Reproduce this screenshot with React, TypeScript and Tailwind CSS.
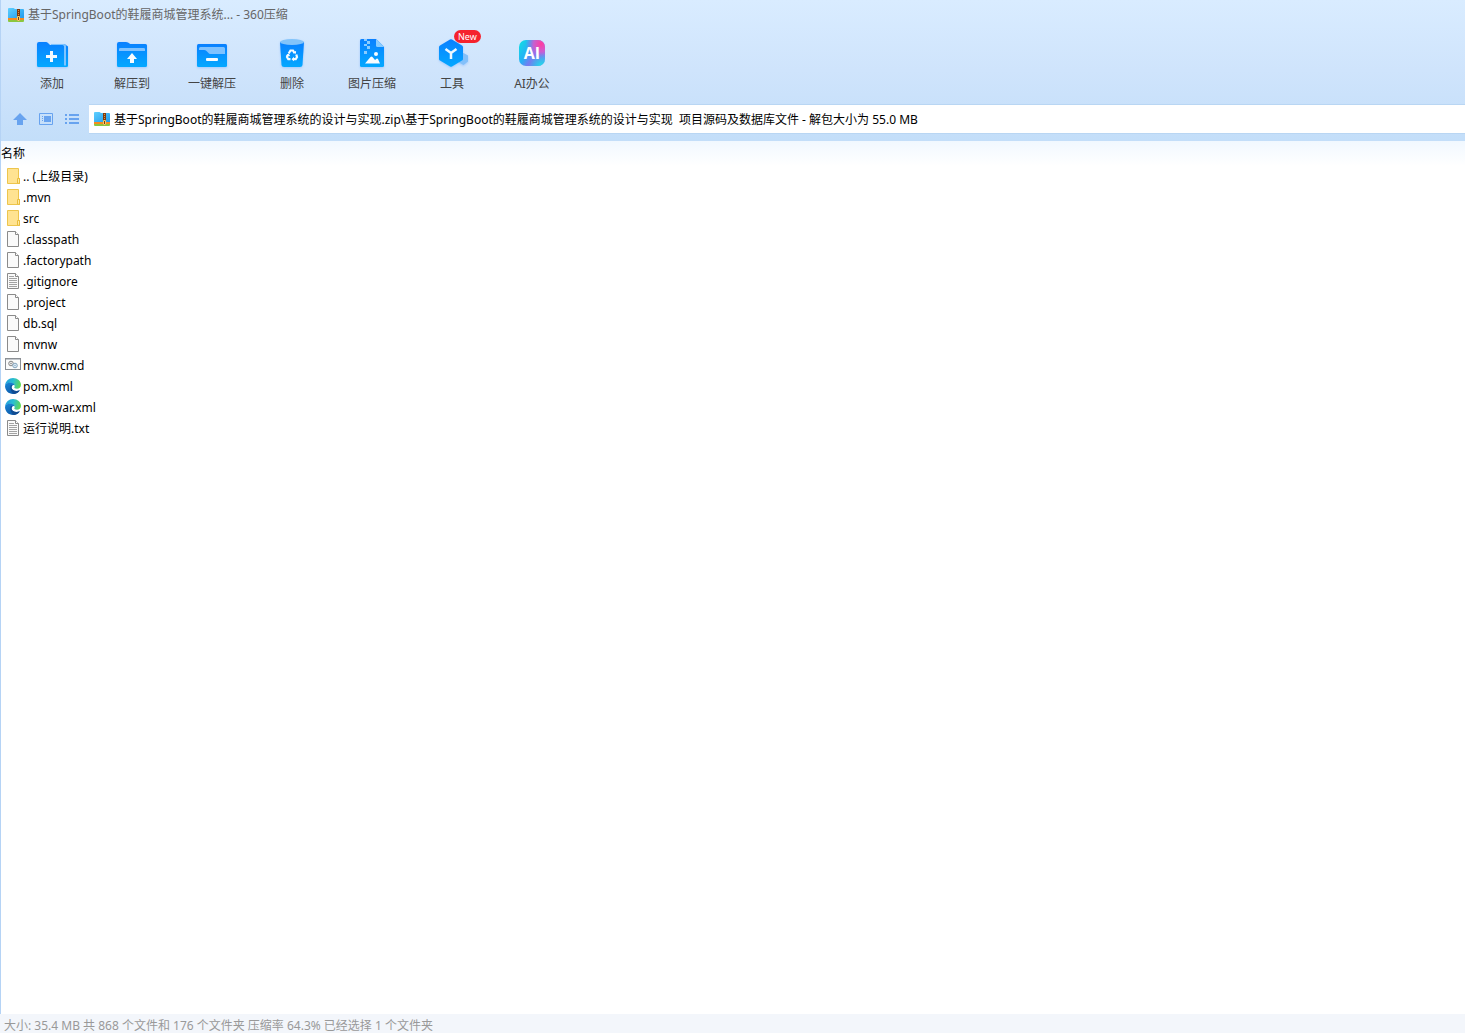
import React from "react";

type IconProps = { className?: string };

function ArchiveLogo() {
  return (
    <svg width="16" height="14" viewBox="0 0 16 14" className="shrink-0" aria-hidden="true">
      <defs>
        <linearGradient id="logoBlue" x1="0" y1="0" x2="1" y2="1">
          <stop offset="0" stopColor="#5fd0ff" />
          <stop offset="1" stopColor="#1f97ea" />
        </linearGradient>
      </defs>
      <path d="M0 1Q0 0 1 0H5.500L7 1H15Q16 1 16 2V11H0Z" fill="url(#logoBlue)" />
      <rect y="10" width="16" height="2" fill="#f78b1f" />
      <path d="M0 12H16V13Q16 14 15 14H1Q0 14 0 13Z" fill="#8cc63f" />
      <rect x="9" y="1" width="3" height="12" fill="#7d3b10" />
      <path d="M10 2h1v1h-1zM10 4h1v1h-1zM10 6h1v1h-1z" fill="#e0913f" />
      <rect x="9" y="8" width="3" height="5" rx="1" fill="#f5cf6a" />
      <rect x="10" y="9" width="1" height="3" fill="#7d3b10" />
    </svg>
  );
}

function ToolSvg({ children, viewBox = "0 0 34 34" }: { children: React.ReactNode; viewBox?: string }) {
  return (
    <svg width="34" height="34" viewBox={viewBox} className="drop-shadow-[0_1px_1px_rgba(60,140,255,0.3)]" aria-hidden="true">
      <defs>
        <linearGradient id="toolBlue" x1="0" y1="0" x2="0" y2="1">
          <stop offset="0" stopColor="#0a80ff" />
          <stop offset="1" stopColor="#04a8ff" />
        </linearGradient>
      </defs>
      {children}
    </svg>
  );
}

const AddIcon = () => (
  <ToolSvg viewBox="0 -1 34 34">
    <path d="M19 6H29.500L33 8.500V27.500Q33 29 31.500 29H19Z" fill="url(#toolBlue)" />
    <path d="M16 6H29Q31 6 31 8V27.500H29V8H16Z" fill="#7fc4ff" />
    <path d="M2 6Q2 4 4 4H11Q12 4 13 5L15 7H27.500Q29 7 29 8.500V29H3.500Q2 29 2 27.500Z" fill="url(#toolBlue)" />
    <path d="M15 13H18V17H22V20H18V24H15V20H11V17H15Z" fill="#f4faff" />
  </ToolSvg>
);

const ExtractIcon = () => (
  <ToolSvg viewBox="0 -1 34 34">
    <path d="M2 6Q2 4 4 4H11Q12 4 13 4.500L14.500 5.500Q15 6 16 6H30.500Q32 6 32 7.500V27.500Q32 29 30.500 29H3.500Q2 29 2 27.500Z" fill="url(#toolBlue)" />
    <path d="M4 11Q4 10 5.500 10H28.500Q30 10 30 11V13H4Z" fill="#7fc2ff" />
    <path d="M17 15L22 21H19V25H15V21H12Z" fill="#f8fcff" />
  </ToolSvg>
);

const QuickExtractIcon = () => (
  <ToolSvg viewBox="0 -1 34 34">
    <rect x="2" y="6" width="30" height="23" rx="1.500" fill="url(#toolBlue)" />
    <path d="M4 10.500Q4 9 5.500 9H28.500Q30 9 30 10.500V16H15.500Q14 16 13 14.500L11.500 13Q10.500 12 9 12H4Z" fill="#7fc2ff" />
    <rect x="11" y="20" width="12" height="3" rx="1" fill="#f8fcff" />
  </ToolSvg>
);

const DeleteIcon = () => (
  <ToolSvg viewBox="0 -1 34 34">
    <path d="M5 4H29L27.500 27Q27.300 29 25 29H9Q6.700 29 6.500 27Z" fill="url(#toolBlue)" />
    <ellipse cx="17" cy="4" rx="12" ry="3" fill="#83c4fa" />
    <g transform="translate(17 17)" fill="none" stroke="#f5fbff" strokeWidth="2.200">
      <path d="M-3.300-1.500L-1.500-4.500H1L2.500-2" />
      <path d="M4.300-.5L5 2L3.700 4.200H.8" />
      <path d="M-1.500 4.200H-3.700L-5 2L-3.800-.4" />
      <path d="M.7-1.900L3.900-1.200L4.100-4.200ZM2 1.800L-.5 4.200L2 6.300ZM-6.200.4L-3.300-1.400L-1.800 1.200Z" fill="#f5fbff" stroke="none" />
    </g>
  </ToolSvg>
);

const ImageIcon = () => (
  <ToolSvg>
    <path d="M5 3.500Q5 2 6.500 2H21L29 10V28.500Q29 30 27.500 30H6.500Q5 30 5 28.500Z" fill="url(#toolBlue)" />
    <path d="M21 2L29 10H22.500Q21 10 21 8.500Z" fill="#8accff" />
    <path d="M9 2h3v2h-3zM12 4h3v3h-3zM9 7h3v2h-3zM12 9h3v3h-3zM9 14h3v3h-3z" fill="#8accff" />
    <circle cx="21" cy="17" r="2" fill="#f8fcff" />
    <path d="M10 26.500L15.500 20Q16.500 19 17.500 20L20 23L21.500 21.800Q22.300 21.300 23 22L25 26.500Z" fill="#f8fcff" />
  </ToolSvg>
);

const ToolsIcon = () => (
  <ToolSvg>
    <path d="M28.500 16L33 18.500V24.500L28.500 28L24 25.500V18.500Z" fill="#83c0fa" />
    <path d="M15 2.500Q16 2 17 2.500L27 8.500Q28 9 28 10V22Q28 23 27 23.600L17 29.500Q16 30 15 29.500L5 23.600Q4 23 4 22V10Q4 9 5 8.500Z" fill="url(#toolBlue)" />
    <path d="M10.500 12L16 16L21.500 12M16 16V22" fill="none" stroke="#eef8ff" strokeWidth="2.500" />
  </ToolSvg>
);

const AiIcon = () => (
  <svg width="34" height="34" viewBox="0 0 34 34" aria-hidden="true">
    <defs>
      <linearGradient id="aiBase" x1="0" y1="0.200" x2="1" y2="0.800">
        <stop offset="0" stopColor="#14d8e6" />
        <stop offset="0.350" stopColor="#28aef5" />
        <stop offset="0.600" stopColor="#7b78f0" />
        <stop offset="1" stopColor="#5b9df5" />
      </linearGradient>
      <radialGradient id="aiPink" cx="0.850" cy="0.150" r="0.600">
        <stop offset="0" stopColor="#ff3d9e" />
        <stop offset="0.500" stopColor="#e552c8" stopOpacity="0.800" />
        <stop offset="1" stopColor="#a060f0" stopOpacity="0" />
      </radialGradient>
      <radialGradient id="aiTeal" cx="0.850" cy="1" r="0.500">
        <stop offset="0" stopColor="#21e0e8" />
        <stop offset="1" stopColor="#21c0e8" stopOpacity="0" />
      </radialGradient>
    </defs>
    <rect x="4" y="3" width="26" height="26" rx="7" fill="url(#aiBase)" />
    <rect x="4" y="3" width="26" height="26" rx="7" fill="url(#aiPink)" />
    <rect x="4" y="3" width="26" height="26" rx="7" fill="url(#aiTeal)" />
    <text x="17" y="22" textAnchor="middle" fontSize="16" fontWeight="700" fill="#fff" fontFamily="'Open Sans','Noto Sans',sans-serif">AI</text>
  </svg>
);

function FolderIcon() {
  return (
    <svg width="16" height="16" viewBox="0 0 16 16" aria-hidden="true">
      <path d="M2.500 .5H13.500V10.500H14.500V15.500H2.500Z" fill="#ffe391" stroke="#edc54c" />
      <path d="M12.500 15V10.500H14.500V15.500Z" fill="#ffeaa6" stroke="#e9bd3d" />
    </svg>
  );
}

function PageIcon({ lines = false }: { lines?: boolean }) {
  return (
    <svg width="16" height="16" viewBox="0 0 16 16" aria-hidden="true">
      <path d="M2.500 .5H10.500L13.500 3.500V15.500H2.500Z" fill="#fafafa" stroke="#8a8a8a" />
      <path d="M10.500 .5V3.500H13.500" fill="#fff" stroke="#8a8a8a" />
      {lines && <path d="M4 3.500H9M4 5.500H12M4 7.500H12M4 9.500H12M4 11.500H12M4 13.500H12" stroke="#a3a3a3" />}
    </svg>
  );
}

function CommandIcon() {
  return (
    <svg width="16" height="16" viewBox="0 0 16 16" aria-hidden="true">
      <rect x=".5" y="1.500" width="15" height="11" fill="#fbfbfb" stroke="#8b8f94" />
      <path d="M1 2.500H15" stroke="#c3c8cd" />
      <circle cx="6" cy="6.500" r="2.300" fill="#eee" stroke="#858585" />
      <circle cx="6" cy="6.500" r=".8" fill="#858585" />
      <circle cx="10" cy="8.500" r="2.300" fill="#dcecf8" stroke="#86a5bd" />
      <circle cx="10" cy="8.500" r=".7" fill="#86a5bd" />
    </svg>
  );
}

function EdgeIcon() {
  return (
    <svg width="16" height="16" viewBox="0 0 16 16" aria-hidden="true">
      <defs>
        <linearGradient id="edgeTop" x1="0" y1="0.300" x2="1" y2="0.500">
          <stop offset="0" stopColor="#219fe0" />
          <stop offset="0.500" stopColor="#2bbfd0" />
          <stop offset="1" stopColor="#62d950" />
        </linearGradient>
        <linearGradient id="edgeBody" x1="0" y1="0" x2="0.600" y2="1">
          <stop offset="0" stopColor="#1a88d8" />
          <stop offset="1" stopColor="#0c58a8" />
        </linearGradient>
      </defs>
      <path d="M0 7.500C.5 3 4 0 8 0C12.500 0 16 3.200 16 6.800C16 9.300 14.200 10.800 12 10.800C10 10.800 9 10 9.300 9.300C10 8.500 9.800 7 8.500 6C6 4 1.500 4.500 0 8Z" fill="url(#edgeTop)" />
      <path d="M0 8C.5 5.500 3 4.200 5.500 4.500C8 4.800 9.600 6 9.700 7.500C8.300 6.500 6.500 7.500 6.500 9.500C6.700 12.500 11 14 14.800 12.300C13.500 14.600 11 16 8 16C3.600 16 0 12.400 0 8Z" fill="url(#edgeBody)" />
      <path d="M6 7C4.800 9 5.200 13.500 9 15.900C12 15.700 13.700 14.300 14.800 12.300C11 14 6.700 12.500 6.500 9.500Q6.500 8 7.500 7.300Z" fill="#104b91" />
    </svg>
  );
}

const tools = [
  { label: "添加", Icon: AddIcon },
  { label: "解压到", Icon: ExtractIcon },
  { label: "一键解压", Icon: QuickExtractIcon },
  { label: "删除", Icon: DeleteIcon },
  { label: "图片压缩", Icon: ImageIcon },
  { label: "工具", Icon: ToolsIcon, badge: "New" },
  { label: "AI办公", Icon: AiIcon },
];

const files: { name: string; icon: React.ReactNode }[] = [
  { name: ".. (上级目录)", icon: <FolderIcon /> },
  { name: ".mvn", icon: <FolderIcon /> },
  { name: "src", icon: <FolderIcon /> },
  { name: ".classpath", icon: <PageIcon /> },
  { name: ".factorypath", icon: <PageIcon /> },
  { name: ".gitignore", icon: <PageIcon lines /> },
  { name: ".project", icon: <PageIcon /> },
  { name: "db.sql", icon: <PageIcon /> },
  { name: "mvnw", icon: <PageIcon /> },
  { name: "mvnw.cmd", icon: <CommandIcon /> },
  { name: "pom.xml", icon: <EdgeIcon /> },
  { name: "pom-war.xml", icon: <EdgeIcon /> },
  { name: "运行说明.txt", icon: <PageIcon lines /> },
];

function UpIcon({ className }: IconProps) {
  return (
    <svg width="14" height="14" viewBox="0 0 14 14" className={className} fill="currentColor" aria-hidden="true">
      <path d="M7 1L14 8H10V13H4V8H0Z" />
    </svg>
  );
}

function PaneIcon({ className }: IconProps) {
  return (
    <svg width="14" height="14" viewBox="0 0 14 14" className={className} fill="currentColor" aria-hidden="true">
      <path d="M.5 1.500H13.500V12.500H.5Z" fill="none" stroke="currentColor" />
      <path d="M3 4h1v1h-1zM3 6h1v1h-1zM3 8h1v1h-1zM5 4h7v6h-7z" />
    </svg>
  );
}

function ListIcon({ className }: IconProps) {
  return (
    <svg width="14" height="14" viewBox="0 0 14 14" className={className} fill="currentColor" aria-hidden="true">
      <path d="M0 2h2v2h-2zM0 6h2v2h-2zM0 10h2v2h-2zM4 2h10v2h-10zM4 6h10v2h-10zM4 10h10v2h-10z" />
    </svg>
  );
}

const views = [
  { label: "上级目录", Icon: UpIcon },
  { label: "预览窗格", Icon: PaneIcon },
  { label: "列表视图", Icon: ListIcon },
];

export default function App() {
  return (
    <div className="flex min-h-screen flex-col bg-white font-['Noto_Sans','Noto_Sans_CJK_SC',sans-serif] text-xs text-black">
      <div className="flex grow flex-col border-l border-[#b5d3f5]">
        <header className="bg-linear-to-b from-[#d9ecff] via-[#cfe4fc] to-[#c3def9]">
          <h1 className="flex h-7 items-center gap-1 pt-px pl-[7px] text-[#666]">
            <ArchiveLogo />
            基于SpringBoot的鞋履商城管理系统... - 360压缩
          </h1>
          <nav className="flex h-19 items-start pt-[9px] pl-[11px]">
            {tools.map(({ label, Icon, badge }) => (
              <button key={label} type="button" className="relative flex w-20 flex-col items-center gap-[3px] text-[#444]">
                <Icon />
                <span className="h-5 leading-5">{label}</span>
                {badge && (
                  <span className="absolute -top-[7px] left-[42px] h-[13px] rounded-full bg-[#f5222d] px-1 text-[9px] leading-[13px] text-white">
                    {badge}
                  </span>
                )}
              </button>
            ))}
          </nav>
          <div className="flex h-[37px] items-start">
            <div className="flex h-[30px] w-[88px] items-center gap-3 pl-3 text-[#68a3ef]">
              {views.map(({ label, Icon }) => (
                <button key={label} type="button" aria-label={label}>
                  <Icon />
                </button>
              ))}
            </div>
            <label className="flex h-[30px] grow items-center gap-1 border-y border-[#b9d6f3] bg-white pl-[5px]">
              <ArchiveLogo />
              <input
                type="text"
                aria-label="路径"
                readOnly
                className="h-5 grow bg-transparent outline-none"
                value={"基于SpringBoot的鞋履商城管理系统的设计与实现.zip\\基于SpringBoot的鞋履商城管理系统的设计与实现  项目源码及数据库文件 - 解包大小为 55.0 MB"}
              />
            </label>
          </div>
        </header>
        <main className="grow">
          <table className="w-full border-collapse">
            <thead>
              <tr className="bg-linear-to-b from-[#f1f8ff] to-white">
                <th scope="col" className="h-[25px] p-0 text-left font-normal">名称</th>
              </tr>
            </thead>
            <tbody>
              {files.map(({ name, icon }) => (
                <tr key={name}>
                  <td className="p-0 pl-1">
                    <span className="flex h-[21px] items-start gap-0.5 pt-0.5 leading-[18px]">
                      {icon}
                      {name}
                    </span>
                  </td>
                </tr>
              ))}
            </tbody>
          </table>
        </main>
      </div>
      <footer className="flex h-[19px] items-center bg-[#f3f6fb] pt-1 pl-1 text-[#999]">
        大小: 35.4 MB 共 868 个文件和 176 个文件夹 压缩率 64.3% 已经选择 1 个文件夹
      </footer>
    </div>
  );
}
